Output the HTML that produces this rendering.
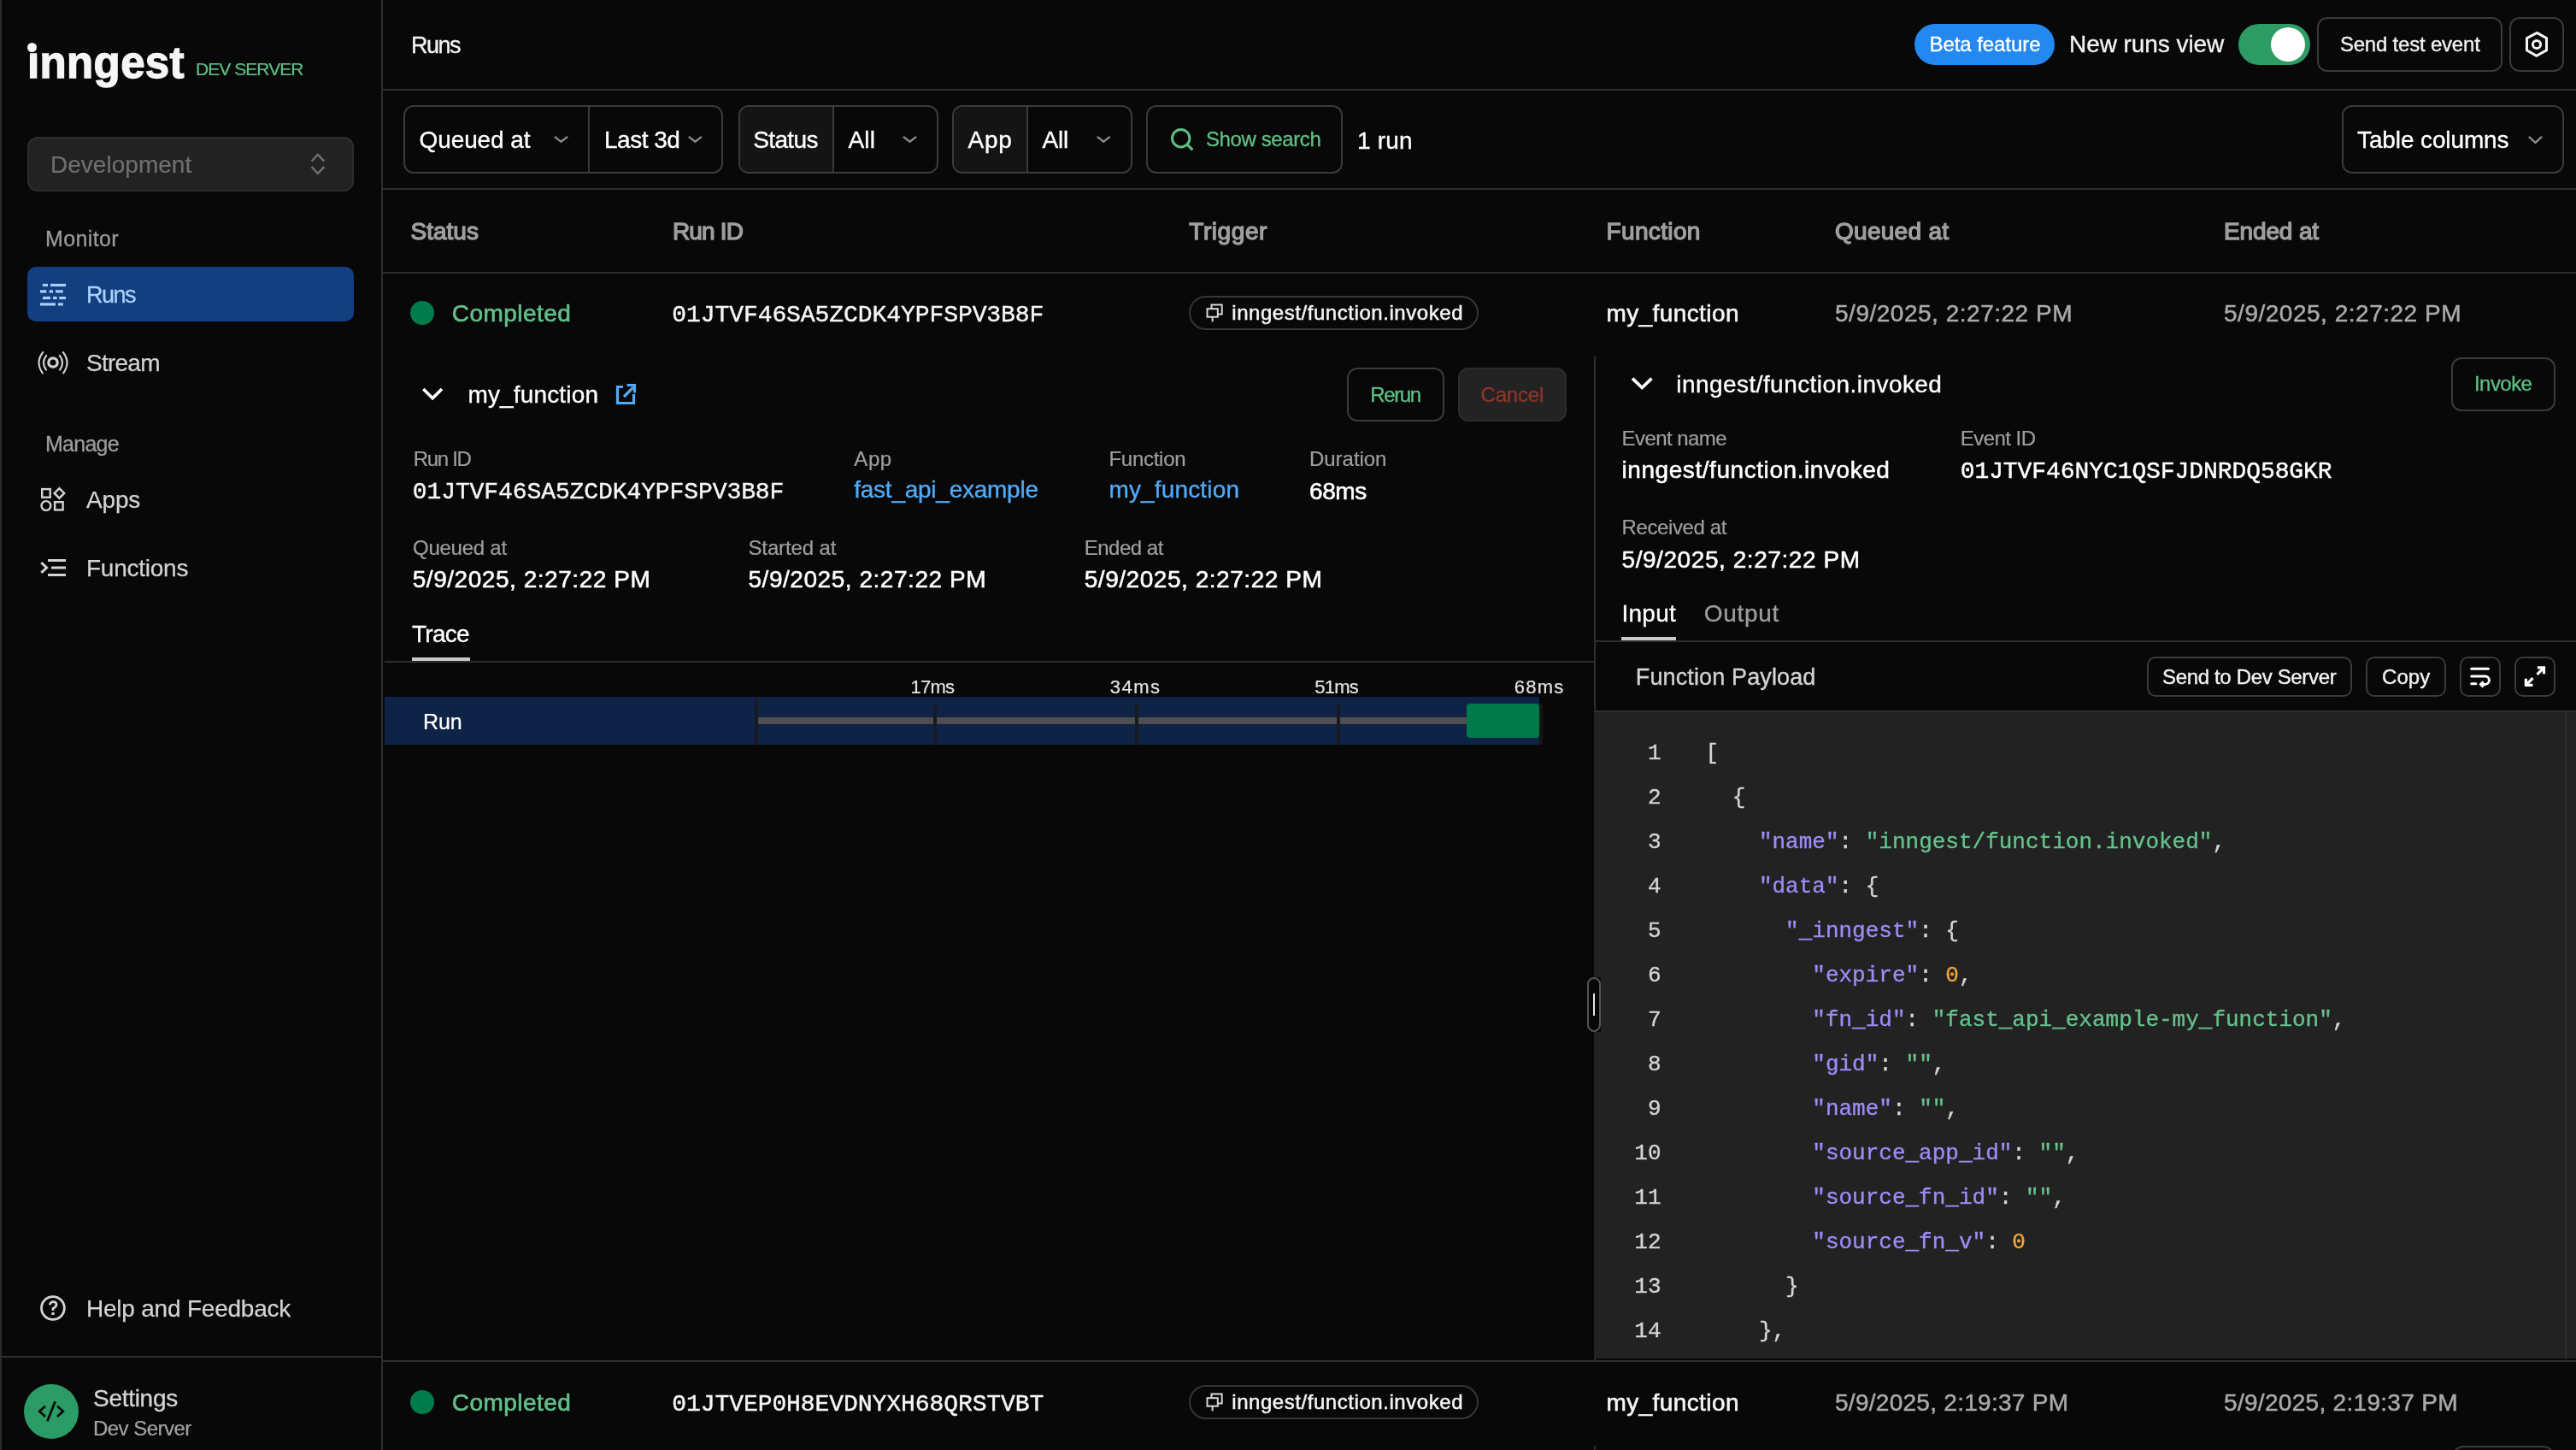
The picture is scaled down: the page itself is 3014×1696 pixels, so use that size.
<!DOCTYPE html>
<html><head><meta charset="utf-8"><style>
html,body{margin:0;padding:0;width:3014px;height:1696px;overflow:hidden;background:#080808;}
.t{position:absolute;white-space:pre;}
.r{position:absolute;box-sizing:border-box;}
.s{position:absolute;overflow:visible;}
</style></head><body><div id="w" style="position:absolute;left:0;top:0;width:3014px;height:1696px;will-change:transform;">
<div class="r" style="left:0px;top:0px;width:2px;height:1696px;background:#2c2c2c;"></div>
<div class="r" style="left:446px;top:0px;width:2px;height:1696px;background:#2e2e2e;"></div>
<div class="r" style="left:0px;top:1586px;width:446px;height:2px;background:#2e2e2e;"></div>
<div class="r" style="left:448px;top:104px;width:2566px;height:2px;background:#2e2e2e;"></div>
<div class="r" style="left:448px;top:220px;width:2566px;height:2px;background:#2e2e2e;"></div>
<div class="r" style="left:448px;top:318px;width:2566px;height:2px;background:#2e2e2e;"></div>
<div class="r" style="left:448px;top:1591px;width:2566px;height:2px;background:#2e2e2e;"></div>
<div class="t" style="left:32.00px;top:40.00px;font-family:'Liberation Sans',sans-serif;font-size:51px;line-height:67px;color:#f6f6f6;font-weight:700;letter-spacing:0.375px;-webkit-text-stroke:1.3px #f6f6f6;">ınngest</div>
<div class="r" style="left:32.3px;top:49.8px;width:11.0px;height:11.0px;background:#f6f6f6;border-radius:6px;"></div>
<div class="t" style="left:229.00px;top:67.00px;font-family:'Liberation Sans',sans-serif;font-size:21px;line-height:28px;color:#5fbf85;letter-spacing:-0.944px;-webkit-text-stroke:0.22px #5fbf85;">DEV SERVER</div>
<div class="r" style="left:32px;top:160px;width:382px;height:64px;background:#222222;border:2px solid #2d2d2d;border-radius:12px;box-sizing:border-box;"></div>
<div class="t" style="left:59.00px;top:174.00px;font-family:'Liberation Sans',sans-serif;font-size:28px;line-height:37px;color:#6f6f6f;letter-spacing:0.025px;-webkit-text-stroke:0.22px #6f6f6f;">Development</div>
<svg class="s" style="left:356px;top:174px;" width="30" height="36" viewBox="0 0 30 36"><path d="M8.6 14.6 L15.9 6.9 L23.3 14.6 M8.6 21.2 L15.9 28.9 L23.3 21.2" fill="none" stroke="#6b6b6b" stroke-width="2.6"/></svg>
<div class="t" style="left:53.00px;top:263.00px;font-family:'Liberation Sans',sans-serif;font-size:25px;line-height:33px;color:#9c9c9c;letter-spacing:0.375px;-webkit-text-stroke:0.3px #9c9c9c;">Monitor</div>
<div class="r" style="left:32px;top:312px;width:382px;height:64px;background:#133e80;border-radius:10px;"></div>
<svg class="s" style="left:40px;top:325px;" width="50" height="40" viewBox="0 0 50 40"><rect x="9.9" y="6.9" width="6.1" height="3.2" fill="#a5d1fa"/><rect x="19.0" y="6.9" width="18.0" height="3.2" fill="#a5d1fa"/><rect x="7.0" y="14.3" width="7.3" height="3.2" fill="#a5d1fa"/><rect x="17.7" y="14.3" width="4.3" height="3.2" fill="#a5d1fa"/><rect x="25.0" y="14.3" width="8.8" height="3.2" fill="#a5d1fa"/><rect x="10.0" y="21.9" width="9.0" height="3.2" fill="#a5d1fa"/><rect x="22.0" y="21.9" width="4.6" height="3.2" fill="#a5d1fa"/><rect x="29.3" y="21.9" width="7.7" height="3.2" fill="#a5d1fa"/><rect x="7.0" y="29.3" width="18.0" height="3.2" fill="#a5d1fa"/><rect x="28.0" y="29.3" width="5.8" height="3.2" fill="#a5d1fa"/></svg>
<div class="t" style="left:101.00px;top:326.75px;font-family:'Liberation Sans',sans-serif;font-size:27px;line-height:36px;color:#a6d2fb;letter-spacing:-1.500px;-webkit-text-stroke:0.3px #a6d2fb;">Runs</div>
<svg class="s" style="left:38px;top:405px;" width="50" height="40" viewBox="0 0 50 40"><g fill="none" stroke="#d2d2d2" stroke-width="2.1" stroke-linecap="round"><circle cx="24" cy="19" r="5.2" stroke-width="3.3"/><path d="M16.2 10.8 Q9.8 19 16 27.6"/><path d="M31.8 10.8 Q38.2 19 32 27.6"/><path d="M12.2 7 Q3 19 11.8 31.3"/><path d="M35.8 7 Q45 19 36.2 31.3"/></g></svg>
<div class="t" style="left:101.00px;top:405.75px;font-family:'Liberation Sans',sans-serif;font-size:28px;line-height:37px;color:#d3d3d3;letter-spacing:-0.750px;-webkit-text-stroke:0.25px #d3d3d3;">Stream</div>
<div class="t" style="left:53.00px;top:503.00px;font-family:'Liberation Sans',sans-serif;font-size:25px;line-height:33px;color:#9c9c9c;letter-spacing:-0.750px;-webkit-text-stroke:0.3px #9c9c9c;">Manage</div>
<svg class="s" style="left:40px;top:565px;" width="45" height="40" viewBox="0 0 45 40"><g fill="none" stroke="#d3d3d3" stroke-width="2.4"><rect x="9.2" y="7.1" width="9.5" height="9.6"/><path d="M29.4 6.1 L35.2 11.9 L29.4 17.7 L23.6 11.9 Z"/><circle cx="13.9" cy="26.5" r="5.4"/><rect x="24.1" y="22.2" width="9.5" height="9.2"/></g></svg>
<div class="t" style="left:101.00px;top:565.75px;font-family:'Liberation Sans',sans-serif;font-size:28px;line-height:37px;color:#d3d3d3;letter-spacing:-0.167px;-webkit-text-stroke:0.25px #d3d3d3;">Apps</div>
<svg class="s" style="left:40px;top:645px;" width="45" height="40" viewBox="0 0 45 40"><g fill="none" stroke="#d3d3d3" stroke-width="3"><path d="M8.3 13.2 L14.6 19 L8.3 24.8"/><path d="M16 10.5 H37 M20.1 19 H37 M16 27.5 H37"/></g></svg>
<div class="t" style="left:101.00px;top:645.75px;font-family:'Liberation Sans',sans-serif;font-size:28px;line-height:37px;color:#d3d3d3;letter-spacing:-0.250px;-webkit-text-stroke:0.25px #d3d3d3;">Functions</div>
<svg class="s" style="left:40px;top:1505px;" width="45" height="50" viewBox="0 0 45 50"><g fill="none" stroke="#d3d3d3" stroke-width="2.8"><circle cx="21.9" cy="25" r="13.4"/><path d="M18.3 21.2 Q19 17.6 22.3 17.6 Q26 17.6 26 21 Q26 23.4 22 25.5 L22 28" stroke-width="2.8"/></g><rect x="20.4" y="30" width="3.2" height="3" fill="#d3d3d3"/></svg>
<div class="t" style="left:101.00px;top:1512.00px;font-family:'Liberation Sans',sans-serif;font-size:28px;line-height:37px;color:#d3d3d3;letter-spacing:-0.219px;-webkit-text-stroke:0.25px #d3d3d3;">Help and Feedback</div>
<div class="r" style="left:28px;top:1619px;width:64px;height:64px;background:#2c9c66;border-radius:32px;"></div>
<svg class="s" style="left:28px;top:1619px;" width="64" height="64" viewBox="0 0 64 64"><g fill="none" stroke="#0a0a0a" stroke-width="2.8"><path d="M25 25.8 L18.2 31.7 L25 38"/><path d="M39 25.8 L45.8 31.7 L39 38"/><path d="M36.6 20.3 L27.4 43.2"/></g></svg>
<div class="t" style="left:109.00px;top:1616.75px;font-family:'Liberation Sans',sans-serif;font-size:28px;line-height:37px;color:#d6d6d6;letter-spacing:-0.286px;-webkit-text-stroke:0.3px #d6d6d6;">Settings</div>
<div class="t" style="left:109.00px;top:1655.00px;font-family:'Liberation Sans',sans-serif;font-size:24px;line-height:32px;color:#a3a3a3;letter-spacing:-0.528px;-webkit-text-stroke:0.22px #a3a3a3;">Dev Server</div>
<div class="t" style="left:481.00px;top:35.00px;font-family:'Liberation Sans',sans-serif;font-size:27px;line-height:36px;color:#f3f3f3;letter-spacing:-1.500px;-webkit-text-stroke:0.35px #f3f3f3;">Runs</div>
<div class="r" style="left:2240px;top:28px;width:164px;height:48px;background:#2389f1;border-radius:24px;"></div>
<div class="t" style="left:2257.50px;top:36.00px;font-family:'Liberation Sans',sans-serif;font-size:24px;line-height:32px;color:#ffffff;letter-spacing:-0.068px;-webkit-text-stroke:0.35px #ffffff;">Beta feature</div>
<div class="t" style="left:2421.00px;top:33.25px;font-family:'Liberation Sans',sans-serif;font-size:28px;line-height:37px;color:#f3f3f3;letter-spacing:-0.062px;-webkit-text-stroke:0.35px #f3f3f3;">New runs view</div>
<div class="r" style="left:2619px;top:28px;width:84px;height:48px;background:#2c9b64;border-radius:24px;"></div>
<div class="r" style="left:2657px;top:32px;width:40px;height:40px;background:#ffffff;border-radius:20px;"></div>
<div class="r" style="left:2711px;top:20px;width:217px;height:64px;background:transparent;border:2px solid #3a3a3a;border-radius:12px;box-sizing:border-box;"></div>
<div class="t" style="left:2737.90px;top:36.30px;font-family:'Liberation Sans',sans-serif;font-size:24px;line-height:32px;color:#f3f3f3;letter-spacing:-0.204px;-webkit-text-stroke:0.35px #f3f3f3;">Send test event</div>
<div class="r" style="left:2936px;top:20px;width:64px;height:64px;background:transparent;border:2px solid #3a3a3a;border-radius:12px;box-sizing:border-box;"></div>
<svg class="s" style="left:2945px;top:30px;" width="45" height="45" viewBox="0 0 45 45"><g fill="none" stroke="#f5f5f5" stroke-width="3"><path d="M23.3 8.4 L34.5 14.6 L34.5 28.9 L22.7 35.4 L11.5 28.9 L11.5 14.6 Z"/><circle cx="23" cy="22" r="4.6"/></g></svg>
<div class="r" style="left:472px;top:123px;width:374px;height:80px;background:transparent;border:2px solid #3a3a3a;border-radius:12px;box-sizing:border-box;"></div>
<div class="r" style="left:688px;top:123px;width:2px;height:80px;background:#3a3a3a;"></div>
<div class="t" style="left:490.50px;top:145.25px;font-family:'Liberation Sans',sans-serif;font-size:28px;line-height:37px;color:#ffffff;letter-spacing:-0.094px;-webkit-text-stroke:0.35px #ffffff;">Queued at</div>
<svg class="s" style="left:643.5px;top:155px;" width="25.0" height="16.5" viewBox="0 0 25.0 16.5"><path d="M4.85 4.85 L12.50 10.80 L20.15 4.85" fill="none" stroke="#8a8a8a" stroke-width="2.4"/></svg>
<div class="t" style="left:707.00px;top:145.25px;font-family:'Liberation Sans',sans-serif;font-size:28px;line-height:37px;color:#ffffff;letter-spacing:-0.500px;-webkit-text-stroke:0.35px #ffffff;">Last 3d</div>
<svg class="s" style="left:801px;top:155px;" width="24.75" height="16.5" viewBox="0 0 24.75 16.5"><path d="M4.85 4.85 L12.38 10.80 L19.90 4.85" fill="none" stroke="#8a8a8a" stroke-width="2.4"/></svg>
<div class="r" style="left:864px;top:123px;width:234px;height:80px;background:transparent;border:2px solid #3a3a3a;border-radius:12px;box-sizing:border-box;overflow:hidden;"></div>
<div class="r" style="left:866px;top:125px;width:108px;height:76px;background:#141414;border-radius:10px 0 0 10px;"></div>
<div class="r" style="left:974px;top:123px;width:2px;height:80px;background:#3a3a3a;"></div>
<div class="t" style="left:881.25px;top:145.25px;font-family:'Liberation Sans',sans-serif;font-size:28px;line-height:37px;color:#ffffff;letter-spacing:-0.650px;-webkit-text-stroke:0.35px #ffffff;">Status</div>
<div class="t" style="left:992.50px;top:145.25px;font-family:'Liberation Sans',sans-serif;font-size:28px;line-height:37px;color:#ffffff;letter-spacing:0.125px;-webkit-text-stroke:0.35px #ffffff;">All</div>
<svg class="s" style="left:1051.5px;top:155px;" width="25.0" height="16.5" viewBox="0 0 25.0 16.5"><path d="M4.85 4.85 L12.50 10.80 L20.15 4.85" fill="none" stroke="#8a8a8a" stroke-width="2.4"/></svg>
<div class="r" style="left:1114px;top:123px;width:211px;height:80px;background:transparent;border:2px solid #3a3a3a;border-radius:12px;box-sizing:border-box;"></div>
<div class="r" style="left:1116px;top:125px;width:85px;height:76px;background:#141414;border-radius:10px 0 0 10px;"></div>
<div class="r" style="left:1201px;top:123px;width:2px;height:80px;background:#3a3a3a;"></div>
<div class="t" style="left:1132.50px;top:145.25px;font-family:'Liberation Sans',sans-serif;font-size:28px;line-height:37px;color:#ffffff;letter-spacing:0.750px;-webkit-text-stroke:0.35px #ffffff;">App</div>
<div class="t" style="left:1219.50px;top:145.25px;font-family:'Liberation Sans',sans-serif;font-size:28px;line-height:37px;color:#ffffff;letter-spacing:-0.250px;-webkit-text-stroke:0.35px #ffffff;">All</div>
<svg class="s" style="left:1278.5px;top:155px;" width="24.5" height="16.5" viewBox="0 0 24.5 16.5"><path d="M4.85 4.85 L12.25 10.80 L19.65 4.85" fill="none" stroke="#8a8a8a" stroke-width="2.4"/></svg>
<div class="r" style="left:1341px;top:123px;width:230px;height:80px;background:transparent;border:2px solid #3a3a3a;border-radius:12px;box-sizing:border-box;"></div>
<svg class="s" style="left:1360px;top:140px;" width="45" height="45" viewBox="0 0 45 45"><g fill="none" stroke="#5fbf85" stroke-width="3"><circle cx="21.7" cy="21.7" r="10.2"/><path d="M29.3 29.3 L35.4 35.4"/></g></svg>
<div class="t" style="left:1411.00px;top:147.25px;font-family:'Liberation Sans',sans-serif;font-size:24px;line-height:32px;color:#5fbf85;letter-spacing:-0.400px;-webkit-text-stroke:0.35px #5fbf85;">Show search</div>
<div class="t" style="left:1588.00px;top:145.75px;font-family:'Liberation Sans',sans-serif;font-size:28px;line-height:37px;color:#ffffff;letter-spacing:0.188px;-webkit-text-stroke:0.35px #ffffff;">1 run</div>
<div class="r" style="left:2740px;top:123px;width:260px;height:80px;background:transparent;border:2px solid #3a3a3a;border-radius:12px;box-sizing:border-box;"></div>
<div class="t" style="left:2758.00px;top:145.30px;font-family:'Liberation Sans',sans-serif;font-size:28px;line-height:37px;color:#ffffff;letter-spacing:-0.117px;-webkit-text-stroke:0.35px #ffffff;">Table columns</div>
<svg class="s" style="left:2953.6px;top:154.5px;" width="24.90000000000009" height="17.5" viewBox="0 0 24.90000000000009 17.5"><path d="M4.85 4.85 L12.45 11.80 L20.05 4.85" fill="none" stroke="#8a8a8a" stroke-width="2.4"/></svg>
<div class="t" style="left:480.50px;top:252.00px;font-family:'Liberation Sans',sans-serif;font-size:28px;line-height:37px;color:#9f9f9f;-webkit-text-stroke:1.35px #9f9f9f;">Status</div>
<div class="t" style="left:787.00px;top:252.00px;font-family:'Liberation Sans',sans-serif;font-size:28px;line-height:37px;color:#9f9f9f;letter-spacing:-0.850px;-webkit-text-stroke:1.35px #9f9f9f;">Run ID</div>
<div class="t" style="left:1391.25px;top:252.00px;font-family:'Liberation Sans',sans-serif;font-size:28px;line-height:37px;color:#9f9f9f;letter-spacing:0.583px;-webkit-text-stroke:1.35px #9f9f9f;">Trigger</div>
<div class="t" style="left:1879.50px;top:252.00px;font-family:'Liberation Sans',sans-serif;font-size:28px;line-height:37px;color:#9f9f9f;letter-spacing:0.357px;-webkit-text-stroke:1.35px #9f9f9f;">Function</div>
<div class="t" style="left:2147.00px;top:252.00px;font-family:'Liberation Sans',sans-serif;font-size:28px;line-height:37px;color:#9f9f9f;letter-spacing:0.281px;-webkit-text-stroke:1.35px #9f9f9f;">Queued at</div>
<div class="t" style="left:2602.00px;top:252.00px;font-family:'Liberation Sans',sans-serif;font-size:28px;line-height:37px;color:#9f9f9f;letter-spacing:-0.143px;-webkit-text-stroke:1.35px #9f9f9f;">Ended at</div>
<div class="r" style="left:480px;top:352px;width:28px;height:28px;background:#007b4b;border-radius:14px;"></div>
<div class="t" style="left:528.75px;top:347.50px;font-family:'Liberation Sans',sans-serif;font-size:28px;line-height:37px;color:#63c08b;letter-spacing:0.469px;-webkit-text-stroke:0.65px #63c08b;">Completed</div>
<div class="t" style="left:786.25px;top:350.25px;font-family:'Liberation Mono',monospace;font-size:28px;line-height:37px;color:#f5f5f5;letter-spacing:-0.070px;-webkit-text-stroke:0.45px #f5f5f5;">01JTVF46SA5ZCDK4YPFSPV3B8F</div>
<div class="r" style="left:1391px;top:346px;width:339px;height:40px;background:transparent;border:2px solid #363636;border-radius:20px;box-sizing:border-box;"></div>
<svg class="s" style="left:1400px;top:345px;" width="40" height="45" viewBox="0 0 40 45"><g fill="none" stroke="#d6d6d6" stroke-width="2"><path d="M17.5 16.2 V11.6 H29.7 V22.6 H24.8"/><rect x="12.5" y="16.2" width="12.3" height="9.5"/><path d="M18.6 25.7 V31.4"/></g></svg>
<div class="t" style="left:1441.25px;top:349.75px;font-family:'Liberation Sans',sans-serif;font-size:24px;line-height:32px;color:#f5f5f5;letter-spacing:0.554px;-webkit-text-stroke:0.5px #f5f5f5;">inngest/function.invoked</div>
<div class="t" style="left:1879.50px;top:348.00px;font-family:'Liberation Sans',sans-serif;font-size:28px;line-height:37px;color:#f5f5f5;letter-spacing:0.400px;-webkit-text-stroke:0.6px #f5f5f5;">my_function</div>
<div class="t" style="left:2147.00px;top:348.00px;font-family:'Liberation Sans',sans-serif;font-size:28px;line-height:37px;color:#a9a9a9;letter-spacing:0.513px;-webkit-text-stroke:0.5px #a9a9a9;">5/9/2025, 2:27:22 PM</div>
<div class="t" style="left:2602.00px;top:348.00px;font-family:'Liberation Sans',sans-serif;font-size:28px;line-height:37px;color:#a9a9a9;letter-spacing:0.513px;-webkit-text-stroke:0.5px #a9a9a9;">5/9/2025, 2:27:22 PM</div>
<div class="r" style="left:480px;top:1626px;width:28px;height:28px;background:#007b4b;border-radius:14px;"></div>
<div class="t" style="left:528.75px;top:1621.50px;font-family:'Liberation Sans',sans-serif;font-size:28px;line-height:37px;color:#63c08b;letter-spacing:0.469px;-webkit-text-stroke:0.65px #63c08b;">Completed</div>
<div class="t" style="left:786.25px;top:1624.25px;font-family:'Liberation Mono',monospace;font-size:28px;line-height:37px;color:#f5f5f5;letter-spacing:-0.070px;-webkit-text-stroke:0.45px #f5f5f5;">01JTVEP0H8EVDNYXH68QRSTVBT</div>
<div class="r" style="left:1391px;top:1620px;width:339px;height:40px;background:transparent;border:2px solid #363636;border-radius:20px;box-sizing:border-box;"></div>
<svg class="s" style="left:1400px;top:1619px;" width="40" height="45" viewBox="0 0 40 45"><g fill="none" stroke="#d6d6d6" stroke-width="2"><path d="M17.5 16.2 V11.6 H29.7 V22.6 H24.8"/><rect x="12.5" y="16.2" width="12.3" height="9.5"/><path d="M18.6 25.7 V31.4"/></g></svg>
<div class="t" style="left:1441.25px;top:1623.75px;font-family:'Liberation Sans',sans-serif;font-size:24px;line-height:32px;color:#f5f5f5;letter-spacing:0.554px;-webkit-text-stroke:0.5px #f5f5f5;">inngest/function.invoked</div>
<div class="t" style="left:1879.50px;top:1622.00px;font-family:'Liberation Sans',sans-serif;font-size:28px;line-height:37px;color:#f5f5f5;letter-spacing:0.400px;-webkit-text-stroke:0.6px #f5f5f5;">my_function</div>
<div class="t" style="left:2147.00px;top:1622.00px;font-family:'Liberation Sans',sans-serif;font-size:28px;line-height:37px;color:#a9a9a9;letter-spacing:0.276px;-webkit-text-stroke:0.5px #a9a9a9;">5/9/2025, 2:19:37 PM</div>
<div class="t" style="left:2602.00px;top:1622.00px;font-family:'Liberation Sans',sans-serif;font-size:28px;line-height:37px;color:#a9a9a9;letter-spacing:0.303px;-webkit-text-stroke:0.5px #a9a9a9;">5/9/2025, 2:19:37 PM</div>
<svg class="s" style="left:488px;top:446px;" width="36" height="30" viewBox="0 0 36 30"><path d="M7.3 9 L18.1 19.8 L29 9" fill="none" stroke="#ffffff" stroke-width="3.6"/></svg>
<div class="t" style="left:547.50px;top:443.00px;font-family:'Liberation Sans',sans-serif;font-size:28px;line-height:37px;color:#ffffff;letter-spacing:0.150px;-webkit-text-stroke:0.35px #ffffff;">my_function</div>
<svg class="s" style="left:716px;top:444px;" width="32" height="34" viewBox="0 0 32 34"><g fill="none" stroke="#52aaf6" stroke-width="3.2"><path d="M13 8.5 H6.5 V27.5 H25.5 V17"/><path d="M14 20 L25 9"/><path d="M17.5 6.5 H26.5 V15.5"/></g></svg>
<div class="r" style="left:1576px;top:429.5px;width:114px;height:63.0px;background:transparent;border:2px solid #3a3a3a;border-radius:12px;box-sizing:border-box;"></div>
<div class="t" style="left:1603.25px;top:445.50px;font-family:'Liberation Sans',sans-serif;font-size:24px;line-height:32px;color:#5fbf85;letter-spacing:-1.375px;-webkit-text-stroke:0.35px #5fbf85;">Rerun</div>
<div class="r" style="left:1706px;top:429.5px;width:127px;height:63.0px;background:#232323;border:2px solid #2c2c2c;border-radius:12px;box-sizing:border-box;"></div>
<div class="t" style="left:1732.50px;top:445.50px;font-family:'Liberation Sans',sans-serif;font-size:24px;line-height:32px;color:#8e3528;letter-spacing:-0.200px;-webkit-text-stroke:0.35px #8e3528;">Cancel</div>
<div class="t" style="left:483.75px;top:521.00px;font-family:'Liberation Sans',sans-serif;font-size:24px;line-height:32px;color:#9e9e9e;letter-spacing:-1.300px;-webkit-text-stroke:0.22px #9e9e9e;">Run ID</div>
<div class="t" style="left:999.25px;top:521.00px;font-family:'Liberation Sans',sans-serif;font-size:24px;line-height:32px;color:#9e9e9e;letter-spacing:0.625px;-webkit-text-stroke:0.22px #9e9e9e;">App</div>
<div class="t" style="left:1297.50px;top:521.00px;font-family:'Liberation Sans',sans-serif;font-size:24px;line-height:32px;color:#9e9e9e;letter-spacing:-0.286px;-webkit-text-stroke:0.22px #9e9e9e;">Function</div>
<div class="t" style="left:1532.00px;top:521.00px;font-family:'Liberation Sans',sans-serif;font-size:24px;line-height:32px;color:#9e9e9e;letter-spacing:-0.036px;-webkit-text-stroke:0.22px #9e9e9e;">Duration</div>
<div class="t" style="left:482.75px;top:557.00px;font-family:'Liberation Mono',monospace;font-size:28px;line-height:37px;color:#f5f5f5;letter-spacing:-0.090px;-webkit-text-stroke:0.45px #f5f5f5;">01JTVF46SA5ZCDK4YPFSPV3B8F</div>
<div class="t" style="left:999.25px;top:554.00px;font-family:'Liberation Sans',sans-serif;font-size:28px;line-height:37px;color:#52aaf6;letter-spacing:-0.250px;-webkit-text-stroke:0.35px #52aaf6;">fast_api_example</div>
<div class="t" style="left:1297.50px;top:554.00px;font-family:'Liberation Sans',sans-serif;font-size:28px;line-height:37px;color:#52aaf6;letter-spacing:0.150px;-webkit-text-stroke:0.35px #52aaf6;">my_function</div>
<div class="t" style="left:1532.00px;top:555.75px;font-family:'Liberation Sans',sans-serif;font-size:28px;line-height:37px;color:#ffffff;letter-spacing:-0.417px;-webkit-text-stroke:0.55px #ffffff;">68ms</div>
<div class="t" style="left:483.00px;top:625.00px;font-family:'Liberation Sans',sans-serif;font-size:24px;line-height:32px;color:#9e9e9e;letter-spacing:-0.250px;-webkit-text-stroke:0.22px #9e9e9e;">Queued at</div>
<div class="t" style="left:875.50px;top:625.00px;font-family:'Liberation Sans',sans-serif;font-size:24px;line-height:32px;color:#9e9e9e;letter-spacing:-0.139px;-webkit-text-stroke:0.22px #9e9e9e;">Started at</div>
<div class="t" style="left:1268.75px;top:625.00px;font-family:'Liberation Sans',sans-serif;font-size:24px;line-height:32px;color:#9e9e9e;letter-spacing:-0.500px;-webkit-text-stroke:0.22px #9e9e9e;">Ended at</div>
<div class="t" style="left:482.75px;top:658.75px;font-family:'Liberation Sans',sans-serif;font-size:28px;line-height:37px;color:#ffffff;letter-spacing:0.539px;-webkit-text-stroke:0.55px #ffffff;">5/9/2025, 2:27:22 PM</div>
<div class="t" style="left:875.50px;top:658.75px;font-family:'Liberation Sans',sans-serif;font-size:28px;line-height:37px;color:#ffffff;letter-spacing:0.539px;-webkit-text-stroke:0.55px #ffffff;">5/9/2025, 2:27:22 PM</div>
<div class="t" style="left:1268.75px;top:658.75px;font-family:'Liberation Sans',sans-serif;font-size:28px;line-height:37px;color:#ffffff;letter-spacing:0.539px;-webkit-text-stroke:0.55px #ffffff;">5/9/2025, 2:27:22 PM</div>
<div class="t" style="left:482.00px;top:723.25px;font-family:'Liberation Sans',sans-serif;font-size:28px;line-height:37px;color:#ffffff;letter-spacing:-0.750px;-webkit-text-stroke:0.35px #ffffff;">Trace</div>
<div class="r" style="left:482px;top:769px;width:68px;height:4px;background:#c9c9c9;"></div>
<div class="r" style="left:450px;top:773px;width:1415px;height:2px;background:#2e2e2e;"></div>
<div class="t" style="left:1065.50px;top:789.25px;font-family:'Liberation Sans',sans-serif;font-size:22px;line-height:29px;color:#e2e2e2;letter-spacing:-0.750px;-webkit-text-stroke:0.22px #e2e2e2;">17ms</div>
<div class="t" style="left:1298.75px;top:789.25px;font-family:'Liberation Sans',sans-serif;font-size:22px;line-height:29px;color:#e2e2e2;letter-spacing:1.500px;-webkit-text-stroke:0.22px #e2e2e2;">34ms</div>
<div class="t" style="left:1538.20px;top:789.25px;font-family:'Liberation Sans',sans-serif;font-size:22px;line-height:29px;color:#e2e2e2;letter-spacing:-0.717px;-webkit-text-stroke:0.22px #e2e2e2;">51ms</div>
<div class="t" style="left:1771.80px;top:789.25px;font-family:'Liberation Sans',sans-serif;font-size:22px;line-height:29px;color:#e2e2e2;letter-spacing:1.183px;-webkit-text-stroke:0.22px #e2e2e2;">68ms</div>
<div class="r" style="left:450px;top:815px;width:1351px;height:56px;background:#0f2347;"></div>
<div class="t" style="left:495.00px;top:828.00px;font-family:'Liberation Sans',sans-serif;font-size:25px;line-height:33px;color:#ffffff;letter-spacing:-0.125px;-webkit-text-stroke:0.22px #ffffff;">Run</div>
<div class="r" style="left:883px;top:815px;width:4px;height:56px;background:#161a22;"></div>
<div class="r" style="left:887px;top:839px;width:829px;height:8px;background:#4e4e4e;"></div>
<div class="r" style="left:1092px;top:823px;width:4px;height:48px;background:#171a20;"></div>
<div class="r" style="left:1328px;top:823px;width:4px;height:48px;background:#171a20;"></div>
<div class="r" style="left:1564px;top:823px;width:4px;height:48px;background:#171a20;"></div>
<div class="r" style="left:1801px;top:823px;width:4px;height:48px;background:#151515;"></div>
<div class="r" style="left:1716px;top:823px;width:85px;height:40px;background:#007a4a;border-radius:4px;"></div>
<div class="r" style="left:1865px;top:417px;width:2px;height:1174px;background:#2e2e2e;"></div>
<svg class="s" style="left:1903px;top:436px;" width="36" height="28" viewBox="0 0 36 28"><path d="M7 6.6 L18.25 17.6 L29.5 6.6" fill="none" stroke="#ffffff" stroke-width="3.6"/></svg>
<div class="t" style="left:1961.25px;top:430.75px;font-family:'Liberation Sans',sans-serif;font-size:28px;line-height:37px;color:#ffffff;letter-spacing:0.446px;-webkit-text-stroke:0.35px #ffffff;">inngest/function.invoked</div>
<div class="r" style="left:2868px;top:417.5px;width:122px;height:63.0px;background:transparent;border:2px solid #3a3a3a;border-radius:12px;box-sizing:border-box;"></div>
<div class="t" style="left:2895.00px;top:433.00px;font-family:'Liberation Sans',sans-serif;font-size:24px;line-height:32px;color:#5fbf85;letter-spacing:-0.550px;-webkit-text-stroke:0.35px #5fbf85;">Invoke</div>
<div class="t" style="left:1897.50px;top:497.25px;font-family:'Liberation Sans',sans-serif;font-size:24px;line-height:32px;color:#9e9e9e;letter-spacing:-0.556px;-webkit-text-stroke:0.22px #9e9e9e;">Event name</div>
<div class="t" style="left:2293.70px;top:497.25px;font-family:'Liberation Sans',sans-serif;font-size:24px;line-height:32px;color:#9e9e9e;letter-spacing:-0.529px;-webkit-text-stroke:0.22px #9e9e9e;">Event ID</div>
<div class="t" style="left:1897.50px;top:530.75px;font-family:'Liberation Sans',sans-serif;font-size:28px;line-height:37px;color:#ffffff;letter-spacing:0.565px;-webkit-text-stroke:0.55px #ffffff;">inngest/function.invoked</div>
<div class="t" style="left:2293.70px;top:532.75px;font-family:'Liberation Mono',monospace;font-size:28px;line-height:37px;color:#ffffff;letter-spacing:-0.078px;-webkit-text-stroke:0.45px #ffffff;">01JTVF46NYC1QSFJDNRDQ58GKR</div>
<div class="t" style="left:1897.50px;top:601.00px;font-family:'Liberation Sans',sans-serif;font-size:24px;line-height:32px;color:#9e9e9e;letter-spacing:-0.385px;-webkit-text-stroke:0.22px #9e9e9e;">Received at</div>
<div class="t" style="left:1897.50px;top:635.75px;font-family:'Liberation Sans',sans-serif;font-size:28px;line-height:37px;color:#ffffff;letter-spacing:0.566px;-webkit-text-stroke:0.55px #ffffff;">5/9/2025, 2:27:22 PM</div>
<div class="t" style="left:1897.50px;top:699.00px;font-family:'Liberation Sans',sans-serif;font-size:28px;line-height:37px;color:#ffffff;letter-spacing:0.250px;-webkit-text-stroke:0.35px #ffffff;">Input</div>
<div class="t" style="left:1993.75px;top:699.00px;font-family:'Liberation Sans',sans-serif;font-size:28px;line-height:37px;color:#9d9d9d;letter-spacing:0.700px;-webkit-text-stroke:0.35px #9d9d9d;">Output</div>
<div class="r" style="left:1897px;top:745px;width:64px;height:4px;background:#c9c9c9;"></div>
<div class="r" style="left:1867px;top:749px;width:1147px;height:2px;background:#2e2e2e;"></div>
<div class="t" style="left:1913.75px;top:774.25px;font-family:'Liberation Sans',sans-serif;font-size:27px;line-height:36px;color:#d3d3d3;letter-spacing:0.133px;-webkit-text-stroke:0.35px #d3d3d3;">Function Payload</div>
<div class="r" style="left:2512px;top:767.5px;width:239.5px;height:47.0px;background:transparent;border:2px solid #3a3a3a;border-radius:10px;box-sizing:border-box;"></div>
<div class="t" style="left:2530.00px;top:775.50px;font-family:'Liberation Sans',sans-serif;font-size:24px;line-height:32px;color:#f3f3f3;letter-spacing:-0.338px;-webkit-text-stroke:0.35px #f3f3f3;">Send to Dev Server</div>
<div class="r" style="left:2768px;top:767.5px;width:93.5px;height:47.0px;background:transparent;border:2px solid #3a3a3a;border-radius:10px;box-sizing:border-box;"></div>
<div class="t" style="left:2787.00px;top:775.50px;font-family:'Liberation Sans',sans-serif;font-size:24px;line-height:32px;color:#f3f3f3;letter-spacing:0.083px;-webkit-text-stroke:0.35px #f3f3f3;">Copy</div>
<div class="r" style="left:2878px;top:767.5px;width:47.5px;height:47.0px;background:transparent;border:2px solid #3a3a3a;border-radius:10px;box-sizing:border-box;"></div>
<svg class="s" style="left:2878px;top:760px;" width="48" height="60" viewBox="0 0 48 60"><g fill="none" stroke="#ffffff" stroke-width="3" stroke-linecap="round"><path d="M13.7 22.2 H33.4"/><path d="M13.7 31 H29.7 A4.7 4.7 0 0 1 29.7 40.4 H25.5"/><path d="M13.7 39.8 H18.8"/><path d="M27.6 37.3 L24.5 40.4 L27.6 43.5" stroke-linecap="butt"/></g></svg>
<div class="r" style="left:2942px;top:767.5px;width:48px;height:47.0px;background:transparent;border:2px solid #3a3a3a;border-radius:10px;box-sizing:border-box;"></div>
<svg class="s" style="left:2942px;top:760px;" width="48" height="60" viewBox="0 0 48 60"><g fill="none" stroke="#ffffff" stroke-width="3.2"><path d="M27 20.8 H34.5 V28.3"/><path d="M34.5 20.8 L26.5 28.8"/><path d="M21.4 41.3 H13.4 V33.8"/><path d="M13.4 41.3 L21.5 33.2"/></g></svg>
<div class="r" style="left:1867px;top:831px;width:1147px;height:2px;background:#2e2e2e;"></div>
<div class="r" style="left:1865px;top:833px;width:1149px;height:756px;background:#222222;"></div>
<div class="r" style="left:3001px;top:833px;width:2px;height:756px;background:#2f2f2f;"></div>
<div class="t" style="left:1927.90px;top:864.00px;font-family:'Liberation Mono',monospace;font-size:26px;line-height:34px;color:#d4d4d4;-webkit-text-stroke:0.35px #d4d4d4;">1</div>
<div class="t" style="left:1995.50px;top:855px;font-family:'Liberation Mono',monospace;font-size:26px;line-height:52px;white-space:pre;-webkit-text-stroke:0.35px currentColor;"><span style="color:#d4d4d4">[</span></div>
<div class="t" style="left:1927.90px;top:916.00px;font-family:'Liberation Mono',monospace;font-size:26px;line-height:34px;color:#d4d4d4;-webkit-text-stroke:0.35px #d4d4d4;">2</div>
<div class="t" style="left:2026.70px;top:907px;font-family:'Liberation Mono',monospace;font-size:26px;line-height:52px;white-space:pre;-webkit-text-stroke:0.35px currentColor;"><span style="color:#d4d4d4">{</span></div>
<div class="t" style="left:1927.90px;top:968.00px;font-family:'Liberation Mono',monospace;font-size:26px;line-height:34px;color:#d4d4d4;-webkit-text-stroke:0.35px #d4d4d4;">3</div>
<div class="t" style="left:2057.90px;top:959px;font-family:'Liberation Mono',monospace;font-size:26px;line-height:52px;white-space:pre;-webkit-text-stroke:0.35px currentColor;"><span style="color:#9d8cf6">"name"</span><span style="color:#d4d4d4">: </span><span style="color:#64c28c">"inngest/function.invoked"</span><span style="color:#d4d4d4">,</span></div>
<div class="t" style="left:1927.90px;top:1020.00px;font-family:'Liberation Mono',monospace;font-size:26px;line-height:34px;color:#d4d4d4;-webkit-text-stroke:0.35px #d4d4d4;">4</div>
<div class="t" style="left:2057.90px;top:1011px;font-family:'Liberation Mono',monospace;font-size:26px;line-height:52px;white-space:pre;-webkit-text-stroke:0.35px currentColor;"><span style="color:#9d8cf6">"data"</span><span style="color:#d4d4d4">: {</span></div>
<div class="t" style="left:1927.90px;top:1072.00px;font-family:'Liberation Mono',monospace;font-size:26px;line-height:34px;color:#d4d4d4;-webkit-text-stroke:0.35px #d4d4d4;">5</div>
<div class="t" style="left:2089.10px;top:1063px;font-family:'Liberation Mono',monospace;font-size:26px;line-height:52px;white-space:pre;-webkit-text-stroke:0.35px currentColor;"><span style="color:#9d8cf6">"_inngest"</span><span style="color:#d4d4d4">: {</span></div>
<div class="t" style="left:1927.90px;top:1124.00px;font-family:'Liberation Mono',monospace;font-size:26px;line-height:34px;color:#d4d4d4;-webkit-text-stroke:0.35px #d4d4d4;">6</div>
<div class="t" style="left:2120.30px;top:1115px;font-family:'Liberation Mono',monospace;font-size:26px;line-height:52px;white-space:pre;-webkit-text-stroke:0.35px currentColor;"><span style="color:#9d8cf6">"expire"</span><span style="color:#d4d4d4">: </span><span style="color:#f3a43a">0</span><span style="color:#d4d4d4">,</span></div>
<div class="t" style="left:1927.90px;top:1176.00px;font-family:'Liberation Mono',monospace;font-size:26px;line-height:34px;color:#d4d4d4;-webkit-text-stroke:0.35px #d4d4d4;">7</div>
<div class="t" style="left:2120.30px;top:1167px;font-family:'Liberation Mono',monospace;font-size:26px;line-height:52px;white-space:pre;-webkit-text-stroke:0.35px currentColor;"><span style="color:#9d8cf6">"fn_id"</span><span style="color:#d4d4d4">: </span><span style="color:#64c28c">"fast_api_example-my_function"</span><span style="color:#d4d4d4">,</span></div>
<div class="t" style="left:1927.90px;top:1228.00px;font-family:'Liberation Mono',monospace;font-size:26px;line-height:34px;color:#d4d4d4;-webkit-text-stroke:0.35px #d4d4d4;">8</div>
<div class="t" style="left:2120.30px;top:1219px;font-family:'Liberation Mono',monospace;font-size:26px;line-height:52px;white-space:pre;-webkit-text-stroke:0.35px currentColor;"><span style="color:#9d8cf6">"gid"</span><span style="color:#d4d4d4">: </span><span style="color:#64c28c">""</span><span style="color:#d4d4d4">,</span></div>
<div class="t" style="left:1927.90px;top:1280.00px;font-family:'Liberation Mono',monospace;font-size:26px;line-height:34px;color:#d4d4d4;-webkit-text-stroke:0.35px #d4d4d4;">9</div>
<div class="t" style="left:2120.30px;top:1271px;font-family:'Liberation Mono',monospace;font-size:26px;line-height:52px;white-space:pre;-webkit-text-stroke:0.35px currentColor;"><span style="color:#9d8cf6">"name"</span><span style="color:#d4d4d4">: </span><span style="color:#64c28c">""</span><span style="color:#d4d4d4">,</span></div>
<div class="t" style="left:1912.30px;top:1332.00px;font-family:'Liberation Mono',monospace;font-size:26px;line-height:34px;color:#d4d4d4;-webkit-text-stroke:0.35px #d4d4d4;">10</div>
<div class="t" style="left:2120.30px;top:1323px;font-family:'Liberation Mono',monospace;font-size:26px;line-height:52px;white-space:pre;-webkit-text-stroke:0.35px currentColor;"><span style="color:#9d8cf6">"source_app_id"</span><span style="color:#d4d4d4">: </span><span style="color:#64c28c">""</span><span style="color:#d4d4d4">,</span></div>
<div class="t" style="left:1912.30px;top:1384.00px;font-family:'Liberation Mono',monospace;font-size:26px;line-height:34px;color:#d4d4d4;-webkit-text-stroke:0.35px #d4d4d4;">11</div>
<div class="t" style="left:2120.30px;top:1375px;font-family:'Liberation Mono',monospace;font-size:26px;line-height:52px;white-space:pre;-webkit-text-stroke:0.35px currentColor;"><span style="color:#9d8cf6">"source_fn_id"</span><span style="color:#d4d4d4">: </span><span style="color:#64c28c">""</span><span style="color:#d4d4d4">,</span></div>
<div class="t" style="left:1912.30px;top:1436.00px;font-family:'Liberation Mono',monospace;font-size:26px;line-height:34px;color:#d4d4d4;-webkit-text-stroke:0.35px #d4d4d4;">12</div>
<div class="t" style="left:2120.30px;top:1427px;font-family:'Liberation Mono',monospace;font-size:26px;line-height:52px;white-space:pre;-webkit-text-stroke:0.35px currentColor;"><span style="color:#9d8cf6">"source_fn_v"</span><span style="color:#d4d4d4">: </span><span style="color:#f3a43a">0</span></div>
<div class="t" style="left:1912.30px;top:1488.00px;font-family:'Liberation Mono',monospace;font-size:26px;line-height:34px;color:#d4d4d4;-webkit-text-stroke:0.35px #d4d4d4;">13</div>
<div class="t" style="left:2089.10px;top:1479px;font-family:'Liberation Mono',monospace;font-size:26px;line-height:52px;white-space:pre;-webkit-text-stroke:0.35px currentColor;"><span style="color:#d4d4d4">}</span></div>
<div class="t" style="left:1912.30px;top:1540.00px;font-family:'Liberation Mono',monospace;font-size:26px;line-height:34px;color:#d4d4d4;-webkit-text-stroke:0.35px #d4d4d4;">14</div>
<div class="t" style="left:2057.90px;top:1531px;font-family:'Liberation Mono',monospace;font-size:26px;line-height:52px;white-space:pre;-webkit-text-stroke:0.35px currentColor;"><span style="color:#d4d4d4">},</span></div>
<div class="r" style="left:1865px;top:1143px;width:8px;height:64px;background:#080808;"></div>
<div class="r" style="left:1857px;top:1143px;width:16px;height:64px;background:#080808;border:2px solid #555555;border-radius:8px;box-sizing:border-box;"></div>
<div class="r" style="left:1864px;top:1162px;width:2px;height:26px;background:#e6e6e6;"></div>
<div class="r" style="left:1865px;top:1691px;width:2px;height:5px;background:#2e2e2e;"></div>
<div class="r" style="left:2870px;top:1691px;width:118px;height:49px;background:transparent;border:2px solid #3a3a3a;border-radius:12px;box-sizing:border-box;"></div>
</div></body></html>
